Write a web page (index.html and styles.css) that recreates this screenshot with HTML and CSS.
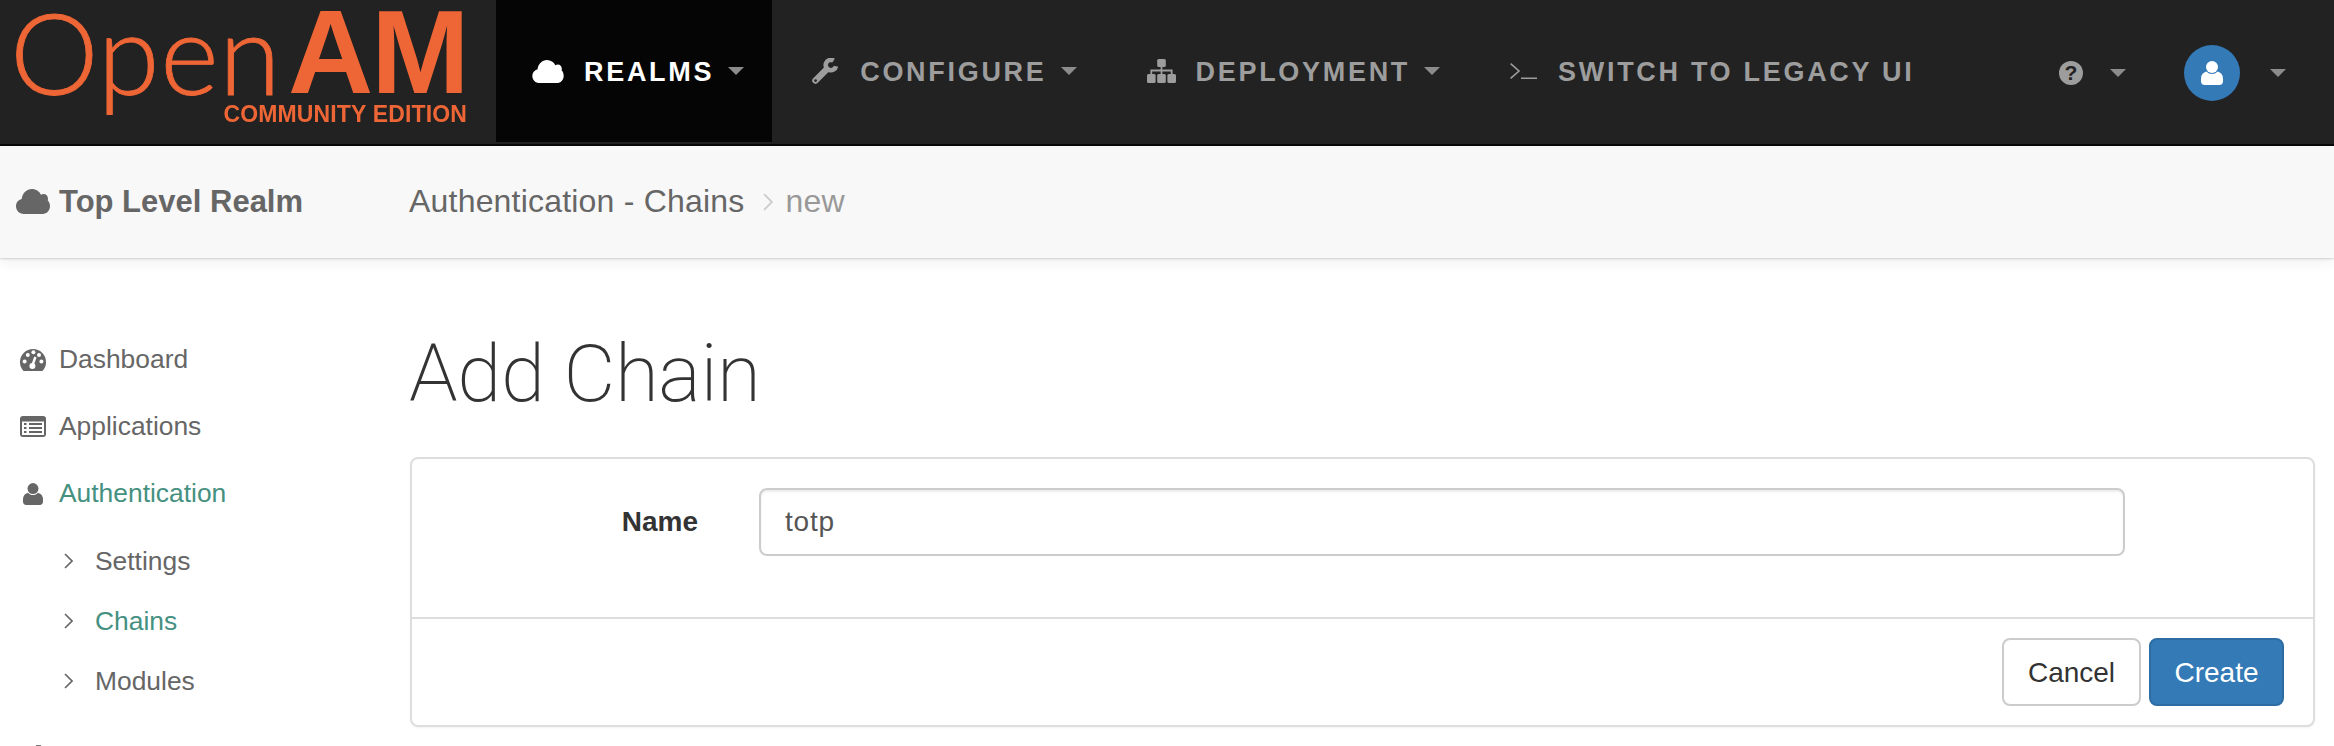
FILE: index.html
```html
<!DOCTYPE html>
<html lang="en">
<head>
<meta charset="utf-8">
<title>OpenAM - Add Chain</title>
<link rel="stylesheet" href="styles.css">
</head>
<body>
<svg class="defs" width="0" height="0" aria-hidden="true">
  <symbol id="i-cloud" viewBox="0 0 30 22"><path fill="currentColor" d="M7 22C3 22 0 19 0 15.2 0 12 2 9.6 5 8.8 5.6 3.8 9.4 0 14 0c3.6 0 6.6 2 8 5 .8-.5 1.5-.7 2.4-.7 2.2 0 3.8 1.7 3.8 4 0 .6 0 1-.2 1.5C29.3 11 30 13 30 15.2 30 19 27 22 23.5 22Z"/></symbol>
  <symbol id="i-user" viewBox="0 0 22 24"><circle cx="11" cy="6" r="6" fill="currentColor"/><path fill="currentColor" d="M5.5 10.5C2 11.5 0 14 0 17.5V20.5C0 22.5 1.5 24 3.5 24H18.5C20.5 24 22 22.5 22 20.5V17.5C22 14 20 11.5 16.5 10.5 15 12.2 13.2 13 11 13S7 12.2 5.5 10.5Z"/></symbol>
  <symbol id="i-chev" viewBox="0 0 9 16"><path fill="none" stroke="currentColor" stroke-width="1.6" d="M1 1l7 7-7 7"/></symbol>
</svg>

<header class="topbar">
  <a class="logo">
    <span class="logo-open">Open</span>
    <span class="logo-am">AM</span>
    <span class="logo-ed">COMMUNITY EDITION</span>
  </a>
  <nav class="mainnav">
    <a class="nav-item active">
      <svg class="nav-icon ic-cloud"><use href="#i-cloud"/></svg>
      <span class="nav-label">Realms</span><i class="caret"></i>
    </a>
    <a class="nav-item">
      <svg class="nav-icon ic-wrench" viewBox="0 0 27 26">
        <path fill="none" stroke="currentColor" stroke-width="6.5" stroke-linecap="round" d="M3.5 22.5L14.5 11.5"/>
        <path fill="none" stroke="currentColor" stroke-width="4.6" d="M21.6 2.6A5.2 5.2 0 1 0 24 8.2"/>
        <circle cx="3.6" cy="22.6" r="1.3" fill="#222"/>
      </svg>
      <span class="nav-label">Configure</span><i class="caret"></i>
    </a>
    <a class="nav-item">
      <svg class="nav-icon ic-map" viewBox="0 0 29 24">
        <rect x="10.2" width="8.6" height="8" rx="1.5" fill="currentColor"/>
        <rect y="15" width="8.6" height="9" rx="1.5" fill="currentColor"/>
        <rect x="10.2" y="15" width="8.6" height="9" rx="1.5" fill="currentColor"/>
        <rect x="20.4" y="15" width="8.6" height="9" rx="1.5" fill="currentColor"/>
        <path fill="none" stroke="currentColor" stroke-width="1.8" d="M14.5 8V15M4.3 15V11.5H24.7V15"/>
      </svg>
      <span class="nav-label">Deployment</span><i class="caret"></i>
    </a>
    <a class="nav-item">
      <svg class="nav-icon ic-term" viewBox="0 0 27 16">
        <path fill="none" stroke="currentColor" stroke-width="1.6" d="M.6.6L9 8 .6 15.4M11 15.2H27"/>
      </svg>
      <span class="nav-label">Switch to Legacy UI</span>
    </a>
  </nav>
  <div class="usernav">
    <span class="help">?</span><i class="caret help-caret"></i>
    <span class="avatar"><svg class="avatar-icon"><use href="#i-user"/></svg></span><i class="caret avatar-caret"></i>
  </div>
</header>

<div class="subbar">
  <div class="realm"><svg class="realm-icon"><use href="#i-cloud"/></svg><span>Top Level Realm</span></div>
  <div class="crumbs">
    <span>Authentication - Chains</span>
    <svg class="crumb-chev"><use href="#i-chev"/></svg>
    <span class="crumb-cur">new</span>
  </div>
</div>

<div class="layout">
  <aside class="sidebar">
    <a class="side-item">
      <svg class="side-icon" viewBox="0 0 26 23">
        <path fill="#666" d="M3.6 23A13 13 0 1 1 22.4 23Z"/>
        <g fill="#fff"><circle cx="4.6" cy="13.6" r="2"/><circle cx="7.8" cy="7" r="2"/><circle cx="13.4" cy="4.2" r="2"/><circle cx="19" cy="7" r="2"/><circle cx="21.4" cy="13.6" r="2"/><circle cx="12.4" cy="18" r="3"/></g>
        <path stroke="#fff" stroke-width="2.4" d="M12.2 18L15.4 9"/>
      </svg>
      <span>Dashboard</span>
    </a>
    <a class="side-item">
      <svg class="side-icon" viewBox="0 0 26 21">
        <rect width="26" height="21" rx="3" fill="#666"/>
        <rect x="2" y="5.5" width="22" height="13.5" fill="#fff"/>
        <path stroke="#666" stroke-width="1.8" d="M4 8H6.5M9 8H22M4 12H6.5M9 12H22M4 16H6.5M9 16H22"/>
      </svg>
      <span>Applications</span>
    </a>
    <a class="side-item current">
      <svg class="side-icon person"><use href="#i-user"/></svg>
      <span>Authentication</span>
    </a>
    <ul class="side-sub">
      <li><svg class="side-chev"><use href="#i-chev"/></svg><span>Settings</span></li>
      <li class="current"><svg class="side-chev"><use href="#i-chev"/></svg><span>Chains</span></li>
      <li><svg class="side-chev"><use href="#i-chev"/></svg><span>Modules</span></li>
    </ul>
    <i class="side-next"></i>
  </aside>

  <main class="content">
    <h1 class="title">Add Chain</h1>
    <form class="panel">
      <div class="panel-body">
        <label class="field-label" for="name">Name</label>
        <input class="field-input" id="name" type="text" value="totp">
      </div>
      <div class="panel-foot">
        <button class="btn" type="button">Cancel</button>
        <button class="btn primary" type="button">Create</button>
      </div>
    </form>
  </main>
</div>
</body>
</html>
```

FILE: styles.css
```css
* { box-sizing: border-box; }
html, body { margin: 0; height: 746px; overflow: hidden; background: #fff; }
body { font-family: "Liberation Sans", Arial, sans-serif; color: #333; }
.defs { position: absolute; }
a { display: flex; align-items: center; }

/* Top bar */
.topbar { display: flex; align-items: flex-start; height: 146px; background: #222; border-bottom: 2px solid #080808; }
.logo { display: grid; grid-template-columns: 288px 179px; grid-template-rows: 102px 24px; align-content: start; align-items: start; width: 496px; height: 142px; color: #ef6636; flex: none; }
.logo-open { grid-row: 1 / 3; font-family: Lato, sans-serif; font-weight: 300; font-size: 112px; line-height: 104px; letter-spacing: .5px; padding-left: 10px; white-space: nowrap; -webkit-text-stroke: .8px #ef6636; filter: blur(.4px); }
.logo-am { font-weight: 700; font-size: 118px; line-height: 100px; padding-top: 2px; letter-spacing: -2px; white-space: nowrap; filter: blur(.4px); }
.logo-ed { justify-self: end; font-weight: 700; font-size: 23px; line-height: 24px; letter-spacing: .15px; white-space: nowrap; filter: blur(.4px); }

.mainnav { display: flex; height: 142px; }
.nav-item { height: 142px; padding: 0 30px 0 40px; color: #9d9d9d; }
.nav-item.active { padding: 0 28px 0 36px; background: #050505; color: #fff; }
.nav-label { padding-top: 2px; font-size: 27px; font-weight: 700; letter-spacing: 2.7px; text-transform: uppercase; white-space: nowrap; }
.nav-icon { flex: none; margin-right: 20px; }
.ic-cloud { width: 32px; height: 23px; }
.ic-wrench { width: 27px; height: 26px; margin-right: 21px; }
.ic-map { width: 29px; height: 24px; }
.ic-term { width: 27px; height: 16px; margin-right: 21px; }
.caret { flex: none; width: 0; height: 0; margin-left: 14px; border-style: solid; border-width: 8px 8px 0; border-color: #8c8c8c transparent transparent; }

.usernav { display: flex; align-items: center; height: 146px; margin-left: auto; padding: 0 48px 0 0; }
.help { display: flex; align-items: center; justify-content: center; width: 24px; height: 24px; border-radius: 50%; background: #9d9d9d; color: #222; font-size: 21px; font-weight: 700; }
.help-caret { margin-left: 27px; }
.avatar { display: flex; align-items: center; justify-content: center; width: 56px; height: 56px; margin-left: 58px; border-radius: 50%; background: #337ab7; color: #fff; }
.avatar-icon { width: 22px; height: 24px; }
.avatar-caret { margin-left: 30px; }

/* Sub bar */
.subbar { position: relative; display: flex; align-items: center; height: 112px; padding: 0 0 1px 16px; background: #f8f8f8; box-shadow: 0 1px 2px rgba(0,0,0,.16), 0 6px 12px rgba(0,0,0,.05); color: #666; }
.realm { display: flex; align-items: center; width: 393px; font-size: 31px; font-weight: 700; }
.realm-icon { width: 34px; height: 25px; margin-right: 9px; }
.crumbs { display: flex; align-items: center; font-size: 32px; letter-spacing: .2px; }
.crumb-chev { width: 10px; height: 18px; margin: 0 12px 0 19px; color: #ccc; }
.crumb-cur { color: #999; }

/* Layout */
.layout { display: flex; }
.sidebar { flex: none; width: 410px; padding-top: 68px; color: #666; font-size: 26.4px; }
.side-item { height: 67px; padding-left: 20px; }
.side-icon { flex: none; width: 26px; height: 23px; margin-right: 13px; }
.side-icon.person { width: 20px; height: 22px; margin: 0 16px 0 3px; color: #666; }
.current { color: #45907f; }
.side-sub { margin: 4px 0 0; padding: 0; list-style: none; }
.side-sub li { display: flex; align-items: center; height: 60px; padding-left: 64px; }
.side-chev { width: 9px; height: 16px; margin-right: 22px; color: #666; }
.side-next { display: block; width: 5px; height: 2px; margin: 34px 0 0 36px; background: #777; }

.content { flex: 1; min-width: 0; padding: 72px 19px 0 0; }
.title { margin: 0 0 39px -1px; font-family: Roboto, sans-serif; font-weight: 200; font-size: 80px; line-height: 88px; letter-spacing: -.4px; color: #333; }
.panel { height: 270px; border: 2px solid #ddd; border-radius: 8px; box-shadow: 0 1px 2px rgba(0,0,0,.05); }
.panel-body { display: grid; grid-template-columns: 286px 1fr; column-gap: 61px; align-items: center; height: 160px; padding: 29px 188px 0 0; align-content: start; border-bottom: 2px solid #ddd; }
.field-label { font-size: 28px; font-weight: 700; text-align: right; color: #333; }
.field-input { width: 100%; height: 68px; padding: 0 24px; border: 2px solid #ccc; border-radius: 8px; box-shadow: inset 0 2px 2px rgba(0,0,0,.075); font: 28px "Liberation Sans", Arial, sans-serif; letter-spacing: .8px; color: #555; background: #fff; }
.panel-foot { display: flex; justify-content: flex-end; gap: 8px; padding: 19px 29px 0 0; }
.btn { width: 139px; height: 68px; padding: 2px 0 0; border: 2px solid #ccc; border-radius: 8px; background: #fff; color: #333; font: 28px "Liberation Sans", Arial, sans-serif; }
.btn.primary { width: 135px; background: #337ab7; border-color: #2e6da4; color: #fff; }
```
